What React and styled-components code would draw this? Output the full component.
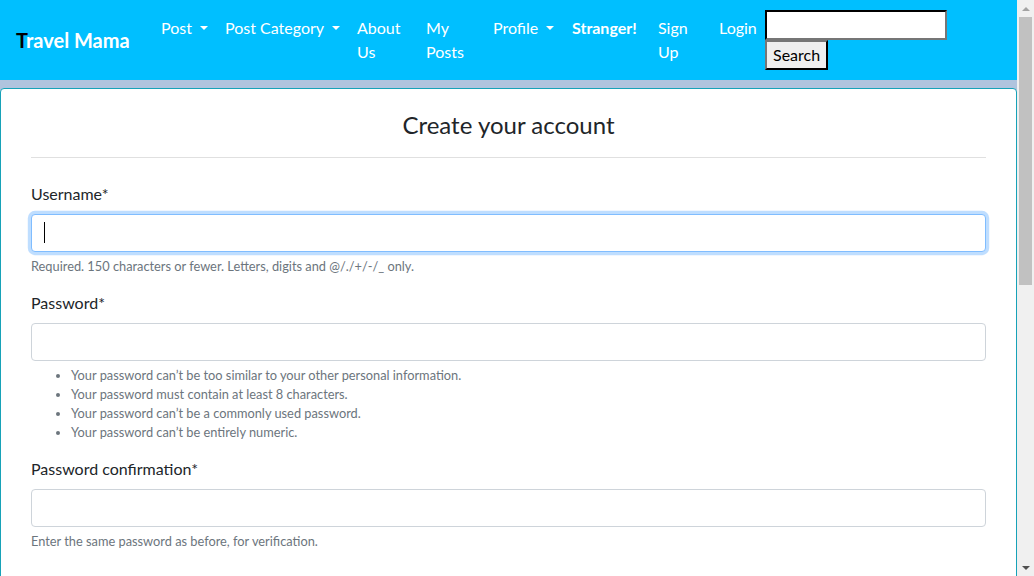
import React from 'react';
import styled, {createGlobalStyle} from 'styled-components';

const GlobalStyle = createGlobalStyle`
    body {
        margin: 0;
        background: #b0c4de;
        font-family: "Lato", "Liberation Sans", sans-serif;
        font-size: 16px;
        line-height: 1.5;
        color: #212529;
    }
    *, *::before, *::after {
        box-sizing: border-box;
    }
`;

// the browser's scrollbar, drawn over the right edge
const Scrollbar = styled.div`
    position: fixed;
    top: 0;
    right: 0;
    bottom: 0;
    width: 17px;
    display: flex;
    flex-direction: column;
    align-items: center;
    background: #f0f0f0;
`;

const ScrollArrow = styled.div`
    flex: none;
    display: flex;
    align-items: center;
    justify-content: center;
    height: 17px;
    width: 17px;
    margin-top: ${props => props.$down ? 'auto' : '0'};

    &::before {
        content: "";
        border-left: 4px solid transparent;
        border-right: 4px solid transparent;
        ${props => props.$down
            ? 'border-top: 4px solid #505050;'
            : 'border-bottom: 4px solid #a3a3a3;'}
    }
`;

const ScrollThumb = styled.div`
    width: 13px;
    height: 268px;
    background: #c1c1c1;
`;

const Navbar = styled.nav`
    display: flex;
    align-items: center;
    height: 80px;
    padding: 8px 16px;
    background: #00bfff;
`;

const Brand = styled.a`
    width: 121px;
    margin-right: 16px;
    font-size: 20px;
    font-weight: 700;
    line-height: 30px;
    color: #fff;
    white-space: nowrap;
    text-decoration: none;

    span {
        color: #000;
    }
`;

const NavList = styled.ul`
    display: flex;
    align-self: stretch;
    align-items: flex-start;
    margin: 0;
    padding: 0;
    list-style: none;
`;

const NavLink = styled.a`
    display: block;
    width: ${props => props.$w}px;
    padding: 8px;
    font-size: 16px;
    line-height: 24px;
    color: #fff;
    font-weight: ${props => props.$bold ? 700 : 400};
    white-space: ${props => props.$toggle ? 'nowrap' : 'normal'};
    text-decoration: none;

    ${props => props.$toggle && `
        &::after {
            content: "";
            display: inline-block;
            margin-left: 0.5em;
            vertical-align: 0.27em;
            border-top: 0.3em solid #fff;
            border-right: 0.3em solid transparent;
            border-left: 0.3em solid transparent;
        }
    `}
`;

const SearchForm = styled.form`
    display: flex;
    flex-direction: column;
    align-items: flex-start;
    margin: 0;
`;

const SearchInput = styled.input`
    width: 182px;
    height: 30px;
    padding: 1px 2px;
    font: inherit;
    border: 2px inset #767676;
    border-top-color: #333;
    border-left-color: #333;
    background: #fff;
`;

const SearchButton = styled.button`
    height: 30px;
    padding: 1px 6px;
    font: inherit;
    line-height: 24px;
    color: #000;
    background: #efefef;
    border: 2px outset #767676;
    border-right-color: #222;
    border-bottom-color: #222;
`;

const Main = styled.main`
    padding-top: 8px;
`;

const Card = styled.section`
    width: 1017px;
    padding: 22px 30px 30px;
    background: #fff;
    border: 1px solid #17a2b8;
    border-radius: 4px;
`;

const Title = styled.h3`
    margin: 0;
    font-size: 24px;
    font-weight: 400;
    line-height: 1.2;
    text-align: center;
`;

const Rule = styled.hr`
    margin: 17px 0 24px;
    border: 0;
    border-top: 1px solid rgba(0, 0, 0, 0.12);
`;

const Group = styled.div`
    margin-bottom: 16px;
`;

const Label = styled.label`
    display: block;
    margin-bottom: 8px;
    line-height: 24px;
`;

const FieldWrap = styled.div`
    position: relative;
`;

const Field = styled.input`
    display: block;
    width: 100%;
    height: 38px;
    padding: 6px 12px;
    font: inherit;
    color: #495057;
    background: #fff;
    border: 1px solid ${props => props.$focused ? '#80bdff' : '#ced4da'};
    border-radius: 4px;
    box-shadow: ${props => props.$focused ? '0 0 0 3.2px rgba(0, 123, 255, 0.25)' : 'none'};
    outline: 0;
`;

const Caret = styled.span`
    position: absolute;
    left: 13px;
    top: 8px;
    width: 1px;
    height: 21px;
    background: #000;
`;

const Help = styled.small`
    display: block;
    margin: 5px 0 -1px;
    font-size: 12.8px;
    line-height: 19px;
    color: #6c757d;
`;

const HelpList = styled.ul`
    margin: 5px 0 -1px;
    padding-left: 40px;
    font-size: 12.8px;
    line-height: 19px;
    color: #6c757d;
`;

const SubmitButton = styled.button`
    margin-top: 40px;
    padding: 6px 12px;
    font: inherit;
    color: #fff;
    background: #17a2b8;
    border: 1px solid #17a2b8;
    border-radius: 4px;
`;

const navItems = [
    {label: 'Post', w: 64, toggle: true},
    {label: 'Post Category', w: 132, toggle: true},
    {label: 'About Us', w: 69},
    {label: 'My Posts', w: 67},
    {label: 'Profile', w: 79, toggle: true},
    {label: 'Stranger!', w: 86, bold: true},
    {label: 'Sign Up', w: 61},
    {label: 'Login', w: 54},
];

const passwordRules = [
    "Your password can\u2019t be too similar to your other personal information.",
    "Your password must contain at least 8 characters.",
    "Your password can\u2019t be a commonly used password.",
    "Your password can\u2019t be entirely numeric.",
];

export default function App() {
    return (
        <>
            <GlobalStyle/>
            <Navbar>
                <Brand href="#"><span>T</span>ravel Mama</Brand>
                <NavList>
                    {navItems.map(item => (
                        <li key={item.label}>
                            <NavLink href="#" $w={item.w} $toggle={item.toggle} $bold={item.bold}>
                                {item.label}
                            </NavLink>
                        </li>
                    ))}
                </NavList>
                <SearchForm onSubmit={e => e.preventDefault()}>
                    <SearchInput type="search" aria-label="Search"/>
                    <SearchButton type="submit">Search</SearchButton>
                </SearchForm>
            </Navbar>
            <Main>
                <Card>
                    <Title>Create your account</Title>
                    <Rule/>
                    <form onSubmit={e => e.preventDefault()}>
                        <Group>
                            <Label>Username*</Label>
                            <FieldWrap>
                                <Field type="text" $focused/>
                                <Caret/>
                            </FieldWrap>
                            <Help>Required. 150 characters or fewer. Letters, digits and @/./+/-/_ only.</Help>
                        </Group>
                        <Group>
                            <Label>Password*</Label>
                            <Field type="password"/>
                            <HelpList>
                                {passwordRules.map(rule => <li key={rule}>{rule}</li>)}
                            </HelpList>
                        </Group>
                        <Group>
                            <Label>Password confirmation*</Label>
                            <Field type="password"/>
                            <Help>Enter the same password as before, for verification.</Help>
                        </Group>
                        <SubmitButton type="submit">Sign Up</SubmitButton>
                    </form>
                </Card>
            </Main>
            <Scrollbar aria-hidden="true">
                <ScrollArrow/>
                <ScrollThumb/>
                <ScrollArrow $down/>
            </Scrollbar>
        </>
    );
}
